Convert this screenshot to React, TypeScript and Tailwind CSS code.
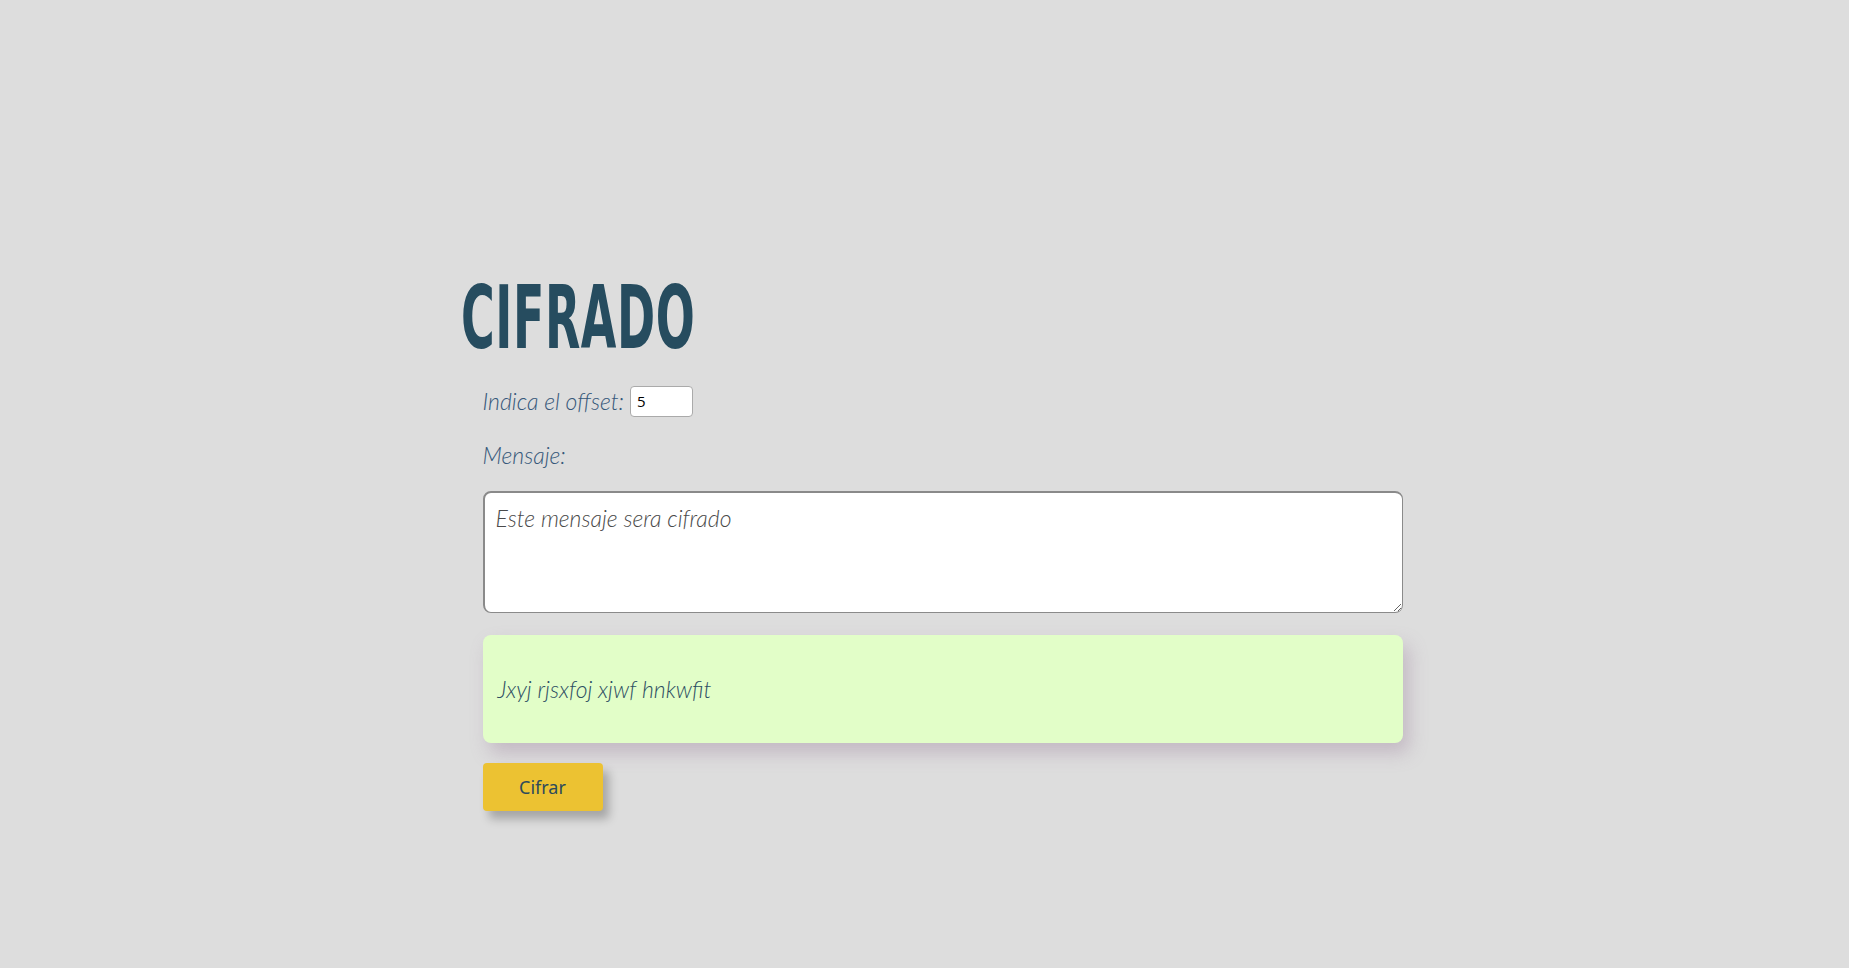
import { useState } from 'react'

function cifrar(text: string, offset: number) {
  return text.replace(/[a-z]/gi, (c) => {
    const base = c === c.toUpperCase() ? 65 : 97
    return String.fromCharCode(((c.charCodeAt(0) - base + offset) % 26 + 26) % 26 + base)
  })
}

export default function App() {
  const [offset, setOffset] = useState(5)
  const [mensaje, setMensaje] = useState('')
  const [resultado, setResultado] = useState(cifrar('Este mensaje sera cifrado', 5))

  return (
    <div className="min-h-screen w-full bg-[#dddddd] font-['Lato','Open_Sans',sans-serif]">
      <div className="mx-auto w-[960px] pt-[268px]">
        {/* titulo */}
        <h1 className="h-[99px] pl-[16px] leading-[100px]">
          <span className="inline-block origin-left scale-x-[0.58] font-['Liberation_Sans_Narrow','DejaVu_Sans_Condensed',sans-serif] text-[88px] font-bold tracking-[1px] text-[#264c5f]">
            CIFRADO
          </span>
        </h1>

        <div className="mt-[17px] pl-[38px]">
          {/* offset */}
          <div className="flex items-center gap-[6px]">
            <label className="text-[23px] font-light italic text-[#36587a]">Indica el offset:</label>
            <input
              type="number"
              value={offset}
              onChange={(e) => setOffset(Number(e.target.value) || 0)}
              className="h-[31px] w-[63px] rounded-[4px] border border-[#aaaaaa] bg-white pl-[6px] font-['Open_Sans',sans-serif] text-[15px] text-black"
            />
          </div>

          <p className="mt-[19px] text-[23px] font-light italic text-[#36587a]">Mensaje:</p>

          {/* mensaje */}
          <textarea
            value={mensaje}
            onChange={(e) => setMensaje(e.target.value)}
            placeholder="Este mensaje sera cifrado"
            className="mt-[19px] block h-[122px] w-[920px] rounded-[8px] border border-t-2 border-l-2 border-[#8a8a8a] bg-white px-[11px] pt-[8px] text-[23px] font-light italic text-[#333] placeholder:text-[#4a4a4a] focus:outline-none"
          />

          {/* resultado */}
          <div className="mt-[22px] flex h-[108px] w-[920px] items-center rounded-[8px] bg-[#e2fec8] px-[15px] shadow-[6px_10px_18px_rgba(150,120,150,0.35)]">
            <span className="text-[23px] font-light italic text-[#2d4f63]">{resultado}</span>
          </div>

          <button
            onClick={() => setResultado(cifrar(mensaje || 'Este mensaje sera cifrado', offset))}
            className="mt-[20px] h-[48px] w-[120px] rounded-[4px] bg-[#ecc232] font-['Noto_Sans','Open_Sans',sans-serif] text-[18px] text-[#2c4a5c] shadow-[6px_8px_10px_rgba(0,0,0,0.25)]"
          >
            Cifrar
          </button>
        </div>
      </div>
    </div>
  )
}
